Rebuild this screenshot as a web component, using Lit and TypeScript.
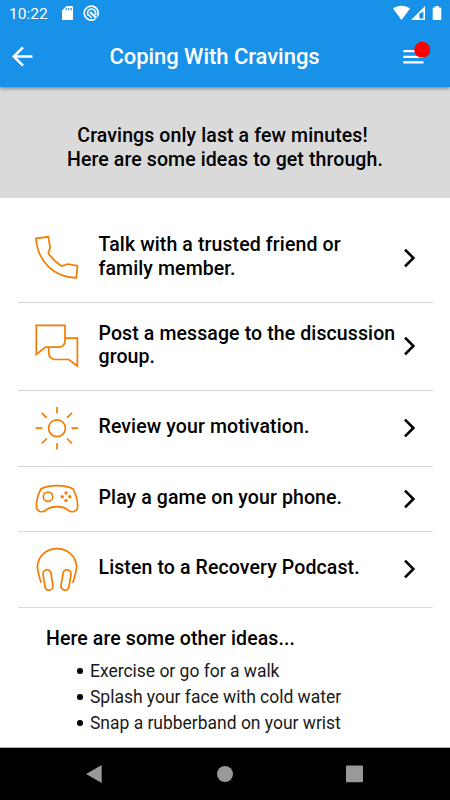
import { LitElement, html, css, svg } from "lit";
import { customElement, property } from "lit/decorators.js";

const icons = {
  phone: svg`<path d="M16 13.3 28.2 11.8 30.2 22.3 28.3 28.2C31.8 33.3 36 37.5 41.5 41L48 39 57.5 40.8 56.3 52.9C34 52.1 17.6 36.9 16 13.3Z"/>`,
  chat: svg`<path d="M16.3 10.3H45V25.5C45 30 42.5 32.2 38 32.2H25.5L16.3 39.5Z"/><path d="M45 23.2H57.4V51L48.8 44.5H36C31.5 44.5 28.7 42 28.7 37.5V32.2"/>`,
  sun: svg`<circle cx="37" cy="33.2" r="8.4"/><path d="M37 12V18.4M37 48V54.6M15.7 33.2H22.4M51.5 33.2H58.2M21.7 17.9 26.7 22.9M52 17.9 47 22.9M21.7 48.5 26.7 43.5M52 48.5 47 43.5"/>`,
  game: svg`<path d="M21 13.8C30 9.5 44 9.5 53 13.8C56 19.5 58 26.5 57.5 32.5C57 36.5 52 38 48.5 35.5C43 30.2 31 30.2 25.5 35.5C22 38 17 36.5 16.5 32.5C16 26.5 18 19.5 21 13.8Z"/><circle cx="28" cy="21.7" r="4.7"/><g class="dots"><circle cx="46" cy="18" r="1.7"/><circle cx="46" cy="25.6" r="1.7"/><circle cx="42.2" cy="21.8" r="1.7"/><circle cx="49.8" cy="21.8" r="1.7"/></g>`,
  headphones: svg`<path d="M21.2 47.7C18.8 40.5 17.4 36 17.4 31.3C18.4 20.5 27 13.6 37 13.6S55.6 20.5 56.6 31.3C56.6 36 55.2 40.5 52.8 47.7"/><rect x="-4" y="-10.3" width="8" height="20.6" rx="4" transform="translate(28 45) rotate(-9)"/><rect x="-4" y="-10.3" width="8" height="20.6" rx="4" transform="translate(46 45) rotate(9)"/>`,
};

type IconName = keyof typeof icons;

const boxes: Record<IconName, [number, number]> = {
  phone: [0, 66],
  chat: [0, 62],
  sun: [0, 67],
  game: [0, 48],
  headphones: [0, 69],
};

@customElement("idea-row")
class IdeaRow extends LitElement {
  @property() icon: IconName = "phone";
  @property() label = "";

  static styles = css`
    :host {
      display: flex;
      align-items: center;
      box-sizing: border-box;
      border-bottom: 1px solid #d8d8d8;
    }
    .icon {
      flex: none;
      width: 44px;
      margin-left: 17px;
      fill: none;
      stroke: #f57c00;
      stroke-width: 1.7;
    }
    .dots {
      fill: #f57c00;
      stroke: none;
    }
    .label {
      flex: 1;
      margin-left: 20px;
      padding-bottom: 2.6px;
      white-space: pre;
    }
    .chevron {
      flex: none;
      width: 14px;
      height: 22px;
      margin-right: 16px;
      fill: none;
      stroke: #000;
      stroke-width: 2.6;
    }
  `;

  render() {
    const [top, height] = boxes[this.icon];
    return html`
      <svg class="icon" height=${height} viewBox="15 ${top} 44 ${height}">${icons[this.icon]}</svg>
      <div class="label">${this.label}</div>
      <svg class="chevron" viewBox="0 0 14 22"><path d="M2 2.6 10.4 11 2 19.4" /></svg>
    `;
  }
}

@customElement("app-root")
class AppRoot extends LitElement {
  static styles = css`
    :host {
      display: flex;
      flex-direction: column;
      height: 800px;
      overflow: hidden;
      background: #fff;
      color: #000;
      font: 500 19.5px/23.5px Roboto, sans-serif;
      letter-spacing: 0.11px;
    }
    svg {
      display: block;
    }
    header {
      flex: none;
      height: 87px;
      background: #1892e8;
      color: #fff;
      box-shadow: 0 1px 4px rgba(0, 0, 0, 0.5);
      z-index: 1;
    }
    .status {
      display: flex;
      justify-content: space-between;
      height: 28px;
      padding-left: 9px;
      font: 400 15.5px/28px Roboto, sans-serif;
      letter-spacing: 0;
    }
    .left {
      display: flex;
    }
    .clock {
      width: 49px;
    }
    .toolbar {
      display: flex;
      align-items: center;
      height: 59px;
    }
    .title {
      flex: 1;
      text-align: center;
      font-size: 22px;
      letter-spacing: -0.04px;
      padding: 0 1px 2px 0;
    }
    .intro {
      flex: none;
      box-sizing: border-box;
      height: 110.5px;
      padding-top: 37px;
      background: #dadada;
      text-align: center;
      white-space: pre;
    }
    .list {
      flex: none;
      padding: 16.5px 17px 0 17.5px;
    }
    .h89 {
      height: 88.6px;
    }
    .h75 {
      height: 75.5px;
    }
    .h65 {
      height: 65.5px;
    }
    .more {
      flex: 1;
      padding: 19px 0 0 46px;
    }
    ul {
      margin: 8px 0 0;
      padding: 0 0 0 31px;
      list-style: none;
      color: #1a1a1a;
      font-size: 17.5px;
      font-weight: 400;
      line-height: 26px;
      letter-spacing: -0.02px;
    }
    li {
      display: flex;
      align-items: center;
    }
    li::before {
      content: "";
      width: 5.5px;
      height: 5.5px;
      margin-right: 7.5px;
      border-radius: 50%;
      background: #000;
    }
    nav {
      flex: none;
      height: 53px;
      background: #000;
      border-top: 1px solid #aaa;
      box-sizing: border-box;
      display: grid;
      grid-template-columns: 160px 1fr 160px;
      fill: #999;
    }
  `;

  render() {
    return html`
      <header>
        <div class="status">
          <div class="left">
            <span class="clock">10:22</span>
            <svg width="52" height="28" viewBox="58 0 52 28">
              <path fill="#fff" fill-rule="evenodd" d="M66.5 6H72a1 1 0 0 1 1 1V19a1 1 0 0 1-1 1H63a1 1 0 0 1-1-1V10.5ZM65.7 8V10.3H66.9V8ZM68.2 8V10.3H69.4V8ZM70.6 8V10.3H71.8V8Z" />
              <g fill="none" stroke="#fff">
                <path stroke-width="1.6" d="M95.3 18.8A7 7 0 1 1 97.4 16.4" />
                <path stroke-width="1.6" d="M88.2 15.5A4.1 4.1 0 1 1 95.3 14.7" />
                <path stroke-width="2.3" d="M90 12 96.5 18" />
                <path stroke-width="1.3" d="M88 14.5 91.8 17.8" />
              </g>
            </svg>
          </div>
          <svg width="60" height="28" viewBox="390 0 60 28">
            <path fill="#fff" d="M393 8.6C398 4.9 405 4.9 410 8.6L401.5 20Z" />
            <path fill="#fff" fill-rule="evenodd" d="M425 6V20H411ZM423.4 11.8L419.3 13.6V18.4H423.4Z" />
            <path fill="#fff" d="M435 6H439V7.5H440.3Q441.3 7.5 441.3 8.5V19Q441.3 20 440.3 20H433.7Q432.7 20 432.7 19V8.5Q432.7 7.5 433.7 7.5H435Z" />
          </svg>
        </div>
        <div class="toolbar">
          <svg width="50" height="59" viewBox="0 28 50 59">
            <path d="M32.5 56.5H13.7M23 47.3 13.7 56.5 23 65.7" fill="none" stroke="#fff" stroke-width="2.5" />
          </svg>
          <div class="title">Coping With Cravings</div>
          <svg width="70" height="59" viewBox="380 28 70 59">
            <path d="M403.3 51.2H423.5M403.3 56.8H423.5M403.3 62.3H423.5" stroke="#fff" stroke-width="2.3" />
            <circle cx="422.2" cy="49.8" r="8" fill="#f00" />
          </svg>
        </div>
      </header>
      <div class="intro">${"Cravings only last a few minutes!\u00a0\nHere are some ideas to get through."}</div>
      <div class="list">
        <idea-row class="h89" icon="phone" label=${"Talk with a trusted friend or\nfamily member."}></idea-row>
        <idea-row class="h89" icon="chat" label=${"Post a message to the discussion\ngroup."}></idea-row>
        <idea-row class="h75" icon="sun" label="Review your motivation."></idea-row>
        <idea-row class="h65" icon="game" label="Play a game on your phone."></idea-row>
        <idea-row class="h75" icon="headphones" label="Listen to a Recovery Podcast."></idea-row>
      </div>
      <div class="more">
        <div>Here are some other ideas...</div>
        <ul>
          <li>Exercise or go for a walk</li>
          <li>Splash your face with cold water</li>
          <li>Snap a rubberband on your wrist</li>
        </ul>
      </div>
      <nav>
        <svg width="160" height="52" viewBox="0 748 160 52"><path d="M86 774 101.7 765V783Z" /></svg>
        <svg width="130" height="52" viewBox="160 748 130 52"><circle cx="225" cy="774" r="8" /></svg>
        <svg width="160" height="52" viewBox="290 748 160 52"><rect x="346" y="765.5" width="17" height="16.7" rx="1" /></svg>
      </nav>
    `;
  }
}
